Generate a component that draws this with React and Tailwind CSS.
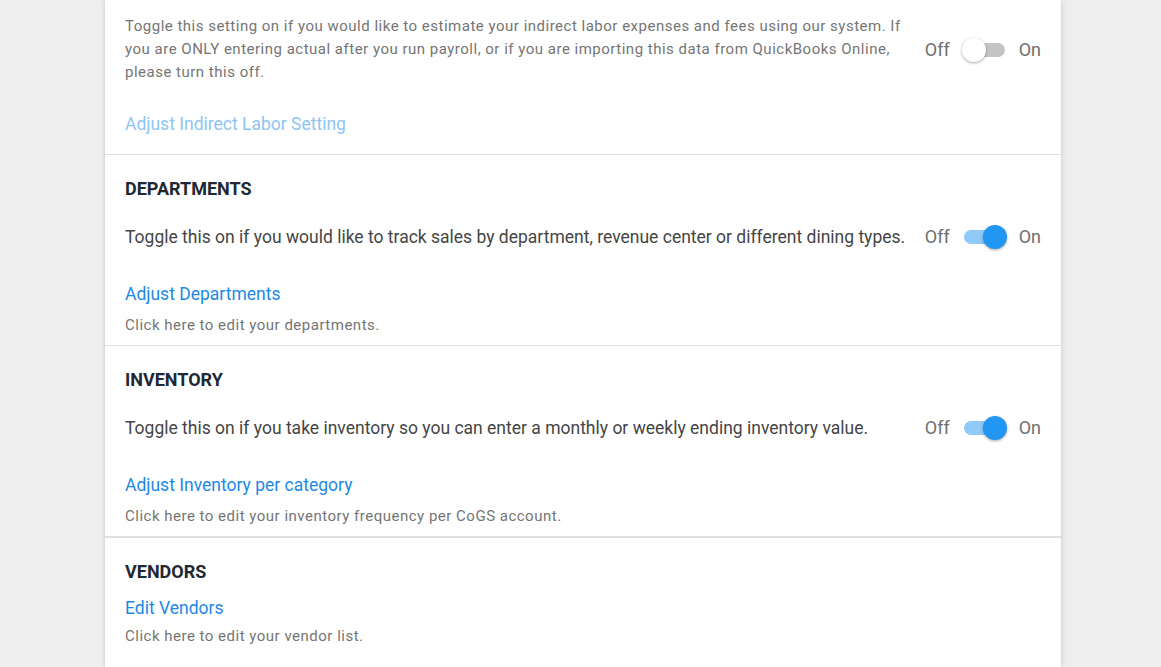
import React from "react";

function Toggle({ on }) {
  return (
    <div className="flex items-center gap-[12px] shrink-0 text-[18px] leading-[24px] text-[#6f6f6f]">
      <span>Off</span>
      <div className="relative w-[45px] h-[24px]">
        <div className={`absolute left-[2px] right-[2px] top-[5px] h-[14px] rounded-full ${on ? "bg-[#90caf9]" : "bg-[#c4c4c4]"}`} />
        <div
          className={`absolute top-0 w-[24px] h-[24px] rounded-full shadow-[0_1px_3px_rgba(0,0,0,0.35)] ${on ? "right-0 bg-[#2196f3]" : "left-0 bg-white"}`}
        />
      </div>
      <span>On</span>
    </div>
  );
}

export default function App() {
  const font = { fontFamily: "Roboto, 'Liberation Sans', sans-serif" };
  return (
    <div className="min-h-[667px] bg-[#eeeeee] overflow-hidden" style={font}>
      <div className="ml-[105px] w-[956px] h-[667px] bg-white shadow-[0_0_5px_rgba(0,0,0,0.18)]">
        {/* Indirect labor section */}
        <div className="px-[20px] pt-[15px] pb-[18px] border-b border-[#e0e0e0]">
          <div className="flex items-center gap-[14px]">
            <p className="flex-1 text-[15px] leading-[23px] tracking-[0.5px] text-[#757575]">
              Toggle this setting on if you would like to estimate your indirect labor expenses and fees using our system. If you are ONLY entering actual after you run payroll, or if you are importing this data from QuickBooks Online, please turn this off.
            </p>
            <Toggle on={false} />
          </div>
          <div className="mt-[28px] text-[17.5px] leading-[24px] text-[#8ec5f2]">Adjust Indirect Labor Setting</div>
        </div>

        {/* Departments */}
        <div className="px-[20px] pt-[22px] pb-[10px] border-b border-[#e0e0e0]">
          <h2 className="text-[18px] leading-[24px] font-bold text-[#212833]">DEPARTMENTS</h2>
          <div className="mt-[22px] flex items-center gap-[14px] h-[28px]">
            <p className="flex-1 text-[17.5px] leading-[28px] text-[#454545] whitespace-nowrap">
              Toggle this on if you would like to track sales by department, revenue center or different dining types.
            </p>
            <Toggle on={true} />
          </div>
          <div className="mt-[31px] text-[17.5px] leading-[24px] text-[#1e88e5]">Adjust Departments</div>
          <div className="mt-[9px] text-[15px] leading-[20px] tracking-[0.5px] text-[#757575]">Click here to edit your departments.</div>
        </div>

        {/* Inventory */}
        <div className="px-[20px] pt-[22px] pb-[10px] border-b-2 border-[#e0e0e0]">
          <h2 className="text-[18px] leading-[24px] font-bold text-[#212833]">INVENTORY</h2>
          <div className="mt-[22px] flex items-center gap-[14px] h-[28px]">
            <p className="flex-1 text-[17.5px] leading-[28px] text-[#454545]">
              Toggle this on if you take inventory so you can enter a monthly or weekly ending inventory value.
            </p>
            <Toggle on={true} />
          </div>
          <div className="mt-[31px] text-[17.5px] leading-[24px] text-[#1e88e5]">Adjust Inventory per category</div>
          <div className="mt-[9px] text-[15px] leading-[20px] tracking-[0.5px] text-[#757575]">Click here to edit your inventory frequency per CoGS account.</div>
        </div>

        {/* Vendors */}
        <div className="px-[20px] pt-[22px]">
          <h2 className="text-[18px] leading-[24px] font-bold text-[#212833]">VENDORS</h2>
          <div className="mt-[12px] text-[17.5px] leading-[24px] text-[#1e88e5]">Edit Vendors</div>
          <div className="mt-[6px] text-[15px] leading-[20px] tracking-[0.5px] text-[#757575]">Click here to edit your vendor list.</div>
        </div>
      </div>
    </div>
  );
}
